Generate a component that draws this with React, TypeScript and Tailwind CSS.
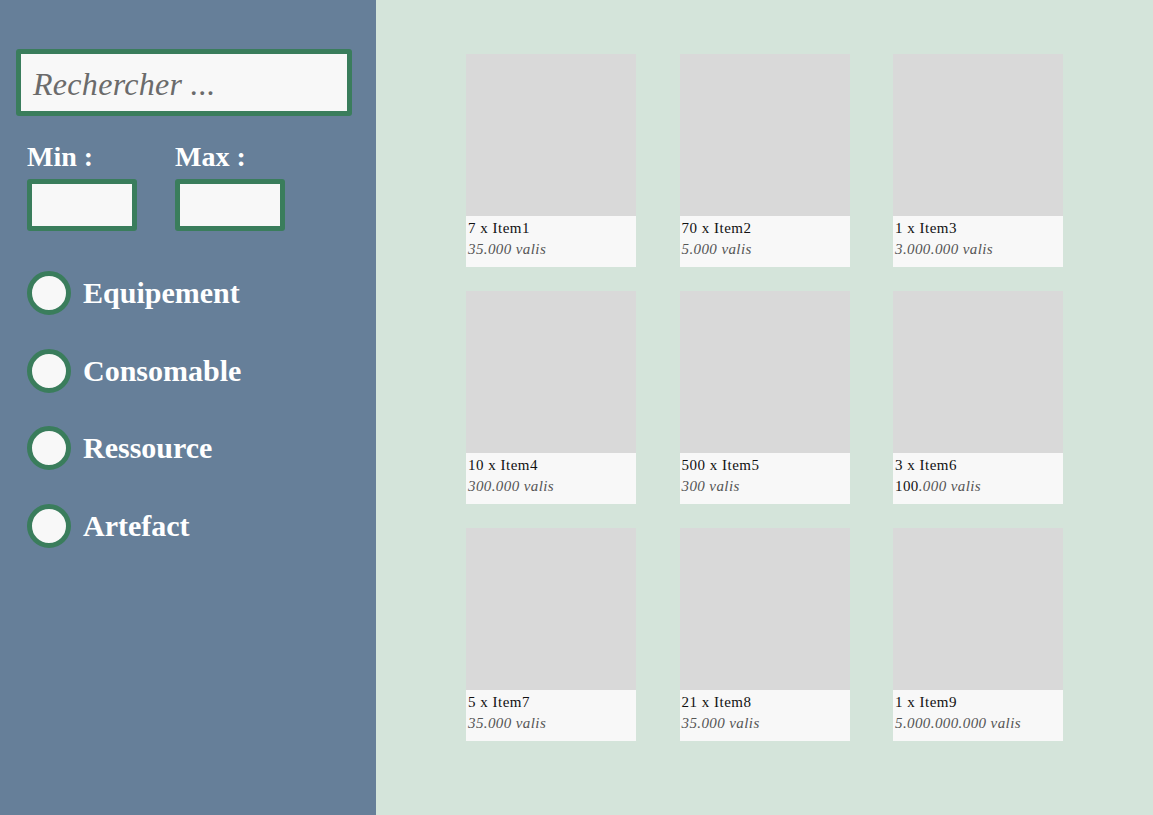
import React from "react";

const items = [
  { q: "7 x Item1", p: "35.000 valis" },
  { q: "70 x Item2", p: "5.000 valis" },
  { q: "1 x Item3", p: "3.000.000 valis" },
  { q: "10 x Item4", p: "300.000 valis" },
  { q: "500 x Item5", p: "300 valis" },
  { q: "3 x Item6", p: "100.000 valis", mixed: true },
  { q: "5 x Item7", p: "35.000 valis" },
  { q: "21 x Item8", p: "35.000 valis" },
  { q: "1 x Item9", p: "5.000.000.000 valis" },
];

const cats = ["Equipement", "Consomable", "Ressource", "Artefact"];

export default function App() {
  return (
    <div
      className="flex w-[1153px] h-[815px] overflow-hidden"
      style={{ fontFamily: '"Liberation Serif", "DejaVu Serif", serif' }}
    >
      <aside className="w-[376px] shrink-0 bg-[#667f99] pt-[49px] pl-[16px]">
        <div className="w-[336px] h-[67px] border-[5px] border-[#3a7d5c] rounded-[3px] bg-[#f8f8f8] flex items-center pl-[12px] pt-[2px]">
          <span className="italic text-[32px] text-[#6b6b6b] leading-none tracking-[0.3px]">Rechercher ...</span>
        </div>
        <div className="flex gap-[38px] pl-[11px] mt-[27px]">
          <div className="flex flex-col">
            <span className="font-bold text-[28px] text-white leading-none">Min :</span>
            <div className="mt-[8px] w-[110px] h-[52px] border-[5px] border-[#3a7d5c] rounded-[3px] bg-[#f8f8f8]" />
          </div>
          <div className="flex flex-col">
            <span className="font-bold text-[28px] text-white leading-none">Max :</span>
            <div className="mt-[8px] w-[110px] h-[52px] border-[5px] border-[#3a7d5c] rounded-[3px] bg-[#f8f8f8]" />
          </div>
        </div>
        <div className="flex flex-col gap-[33.7px] pl-[11px] mt-[40px]">
          {cats.map((c) => (
            <div key={c} className="flex items-center gap-[12px] h-[44px]">
              <div className="w-[44px] h-[44px] rounded-full border-[5.5px] border-[#3a7d5c] bg-[#f8f8f8]" />
              <span className="font-bold text-[30px] text-white leading-none">{c}</span>
            </div>
          ))}
        </div>
      </aside>
      <main className="flex-1 bg-[#d4e4da] pt-[54px] pl-[90px]">
        <div className="grid grid-cols-[170px_170px_170px] gap-x-[43.5px] gap-y-[24px]">
          {items.map((it) => (
            <div key={it.q} className="w-[170px] flex flex-col">
              <div className="h-[162px] bg-[#d9d9d9]" />
              <div className="h-[51px] bg-[#f8f8f8] pl-[2px] pt-[2px]">
                <div className="text-[15px] text-[#111] leading-[20px] tracking-[0.5px]">{it.q}</div>
                <div className="text-[15px] leading-[22px] text-[#555] italic tracking-[0.4px]">
                  {it.mixed ? (
                    <>
                      <span className="not-italic text-[#111]">100</span>.000 valis
                    </>
                  ) : (
                    it.p
                  )}
                </div>
              </div>
            </div>
          ))}
        </div>
      </main>
    </div>
  );
}
